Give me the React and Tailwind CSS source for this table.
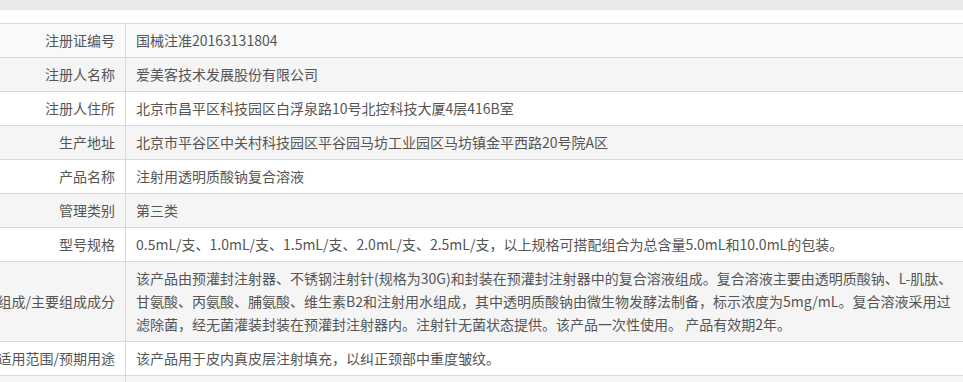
const rows = [
  { label: '注册证编号', value: '国械注准20163131804' },
  { label: '注册人名称', value: '爱美客技术发展股份有限公司' },
  { label: '注册人住所', value: '北京市昌平区科技园区白浮泉路10号北控科技大厦4层416B室' },
  { label: '生产地址', value: '北京市平谷区中关村科技园区平谷园马坊工业园区马坊镇金平西路20号院A区' },
  { label: '产品名称', value: '注射用透明质酸钠复合溶液' },
  { label: '管理类别', value: '第三类' },
  {
    label: '型号规格',
    value: '0.5mL/支、1.0mL/支、1.5mL/支、2.0mL/支、2.5mL/支，以上规格可搭配组合为总含量5.0mL和10.0mL的包装。',
  },
  {
    label: '结构及组成/主要组成成分',
    lines: [
      '该产品由预灌封注射器、不锈钢注射针(规格为30G)和封装在预灌封注射器中的复合溶液组成。复合溶液主要由透明质酸钠、L-肌肽、',
      '甘氨酸、丙氨酸、脯氨酸、维生素B2和注射用水组成，其中透明质酸钠由微生物发酵法制备，标示浓度为5mg/mL。复合溶液采用过',
      '滤除菌，经无菌灌装封装在预灌封注射器内。注射针无菌状态提供。该产品一次性使用。 产品有效期2年。',
    ],
  },
  { label: '适用范围/预期用途', value: '该产品用于皮内真皮层注射填充，以纠正颈部中重度皱纹。' },
  { label: '\u00a0', value: '\u00a0' },
]

export default function App() {
  return (
    <div className="w-[963px] h-[382px] overflow-hidden bg-white text-[14px] text-[#555] font-['Microsoft_YaHei','Noto_Sans_CJK_SC',sans-serif]">
      <div className="h-[10px] bg-[#e9e9e9]" />
      <div className="mt-[13px] border-t border-[#d9d9d9]">
        {rows.map((row, i) => (
          <div
            key={i}
            className={
              'flex border-b border-[#d9d9d9] ' +
              (i === 0 ? 'bg-[#f8f9fb]' : i % 2 === 1 ? 'bg-[#f5f5f5]' : 'bg-white')
            }
          >
            <div className="w-[126px] shrink-0 flex items-center justify-end border-r border-[#d9d9d9] pr-[10px] py-[5px] leading-[23px] whitespace-nowrap">
              <span>{row.label}</span>
            </div>
            <div className="flex-1 pl-[10px] py-[5px] leading-[23px] whitespace-nowrap">
              {row.lines ? row.lines.map((l, j) => <div key={j}>{l}</div>) : row.value}
            </div>
          </div>
        ))}
      </div>
    </div>
  )
}
